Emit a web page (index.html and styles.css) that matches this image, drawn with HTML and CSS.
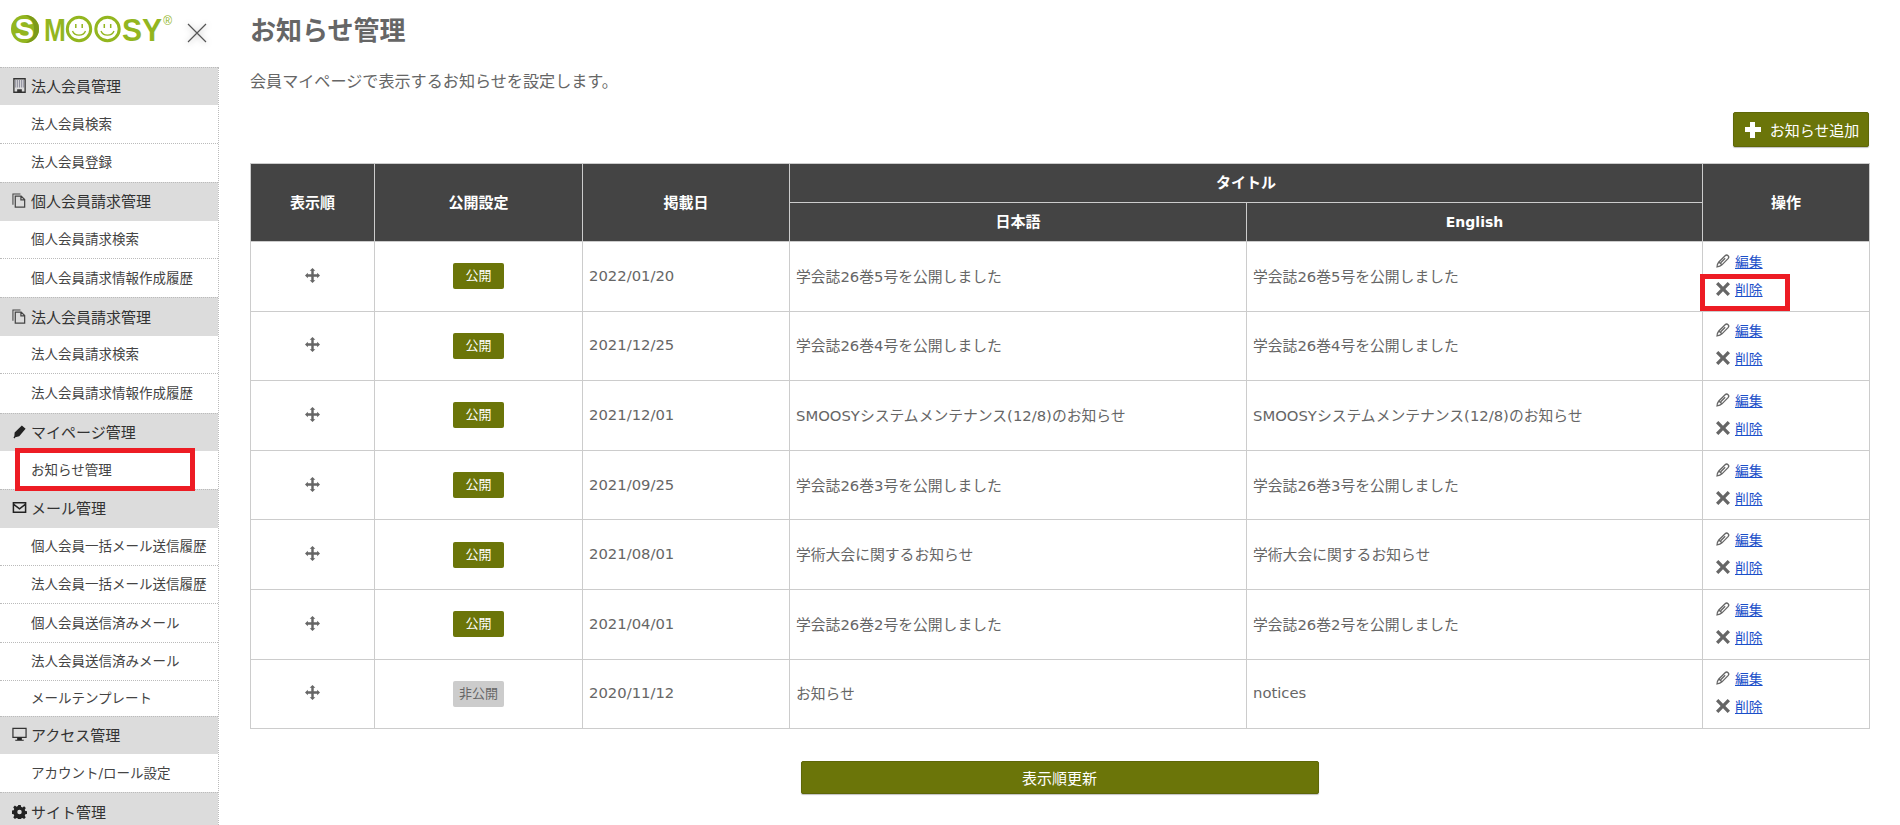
FILE: index.html
```html
<!DOCTYPE html>
<html lang="ja">
<head>
<meta charset="utf-8">
<title>お知らせ管理</title>
<link rel="stylesheet" href="styles.css">
</head>
<body>
<svg class="defs" width="0" height="0" aria-hidden="true">
  <symbol id="i-move" viewBox="0 0 16 16"><path d="M8 0l3 3H9.300v3.700H13V5l3 3-3 3V9.300H9.300V13H11l-3 3-3-3h1.700V9.300H3V11L0 8l3-3v1.700h3.700V3H5z"/></symbol>
  <symbol id="i-pencil" viewBox="0 0 16 16"><path fill="none" stroke="currentColor" stroke-width="1.500" d="M1.200 14.800c.1-2.200.8-4.300 2-5.700L10.400 1.900c1.100-1 2.400-1 3.400 0s1 2.300 0 3.400L6.800 12.400c-1.500 1.400-3.400 2.100-5.600 2.400zM3.200 9.100l3.600 3.300M10.500 4.800L5.400 10"/></symbol>
  <symbol id="i-x" viewBox="0.600 0.600 14.800 14.800"><path d="M3.100.6L8 5.500 12.900.6l2.500 2.500L10.500 8l4.900 4.900-2.500 2.500L8 10.500l-4.900 4.900-2.500-2.500L5.500 8 .6 3.100z"/></symbol>
  <symbol id="i-doc" viewBox="0 0 16 16"><path fill="none" stroke="#444" stroke-width="1.100" d="M1 12.500V1h8"/><path fill="none" stroke="#444" stroke-width="1.300" d="M3.500 3.300h6.300l3.700 3.700v8H3.500zM9.500 3.500V7.300h4"/></symbol>
</svg>
<div class="page">
  <aside class="sidebar">
    <div class="brand">
      <svg class="logo" width="164" height="40" viewBox="0 -4 164 40" role="img" aria-label="SMOOSY">
        <circle cx="16" cy="16" r="14" fill="#93b61f"/>
        <path d="M16 2a14 14 0 0 1 0 28c6-3 9-8 9-14S22 5 16 2z" fill="#7c9a17"/>
        <text x="15.500" y="26" class="logo-s" text-anchor="middle">S</text>
        <text class="logo-t" transform="translate(35 28) scale(.82 1)">M</text>
        <circle cx="70" cy="16" r="11.700" fill="none" stroke="#93b61f" stroke-width="3"/>
        <path d="M63.500 18c2 5.500 11 5.500 13 0" fill="none" stroke="#93b61f" stroke-width="1.300"/>
        <path d="M66.800 11v4M73.200 11v4" stroke="#93b61f" stroke-width="1.500"/>
        <circle cx="98.500" cy="16" r="11.700" fill="none" stroke="#93b61f" stroke-width="3"/>
        <path d="M92 18c2 5.500 11 5.500 13 0" fill="none" stroke="#93b61f" stroke-width="1.300"/>
        <path d="M95.300 11v4M101.700 11v4" stroke="#93b61f" stroke-width="1.500"/>
        <text class="logo-t" transform="translate(113 28) scale(.94 1)">SY</text>
        <text x="163" y="12" class="logo-r" text-anchor="end">®</text>
      </svg>
      <svg class="close" width="20" height="20" viewBox="0 0 20 20"><path d="M1 1l18 18M19 1L1 19" stroke="#555" stroke-width="1.200"/></svg>
    </div>
    <nav class="menu">
      <h2 class="mhead"><svg class="mi" viewBox="0 0 16 16"><path fill="none" stroke="#333" stroke-width="1.400" d="M2 .8h12v14.400H2z"/><path stroke="#8a8a9a" stroke-width="8" stroke-dasharray="1 1" d="M3.500 6h9"/><path fill="#333" d="M5.500 12h5v3h-5z"/></svg>法人会員管理</h2>
      <a class="mitem">法人会員検索</a>
      <a class="mitem">法人会員登録</a>
      <h2 class="mhead"><svg class="mi"><use href="#i-doc"/></svg>個人会員請求管理</h2>
      <a class="mitem">個人会員請求検索</a>
      <a class="mitem">個人会員請求情報作成履歴</a>
      <h2 class="mhead"><svg class="mi"><use href="#i-doc"/></svg>法人会員請求管理</h2>
      <a class="mitem">法人会員請求検索</a>
      <a class="mitem">法人会員請求情報作成履歴</a>
      <h2 class="mhead"><svg class="mi" viewBox="0 0 16 16"><path fill="#222" d="M10.500 1.500l4 3.500-6.800 8L3.500 14l-.6 1.500-1.400-1 1-1.500.3-4z"/></svg>マイページ管理</h2>
      <a class="mitem">お知らせ管理</a>
      <h2 class="mhead"><svg class="mi" viewBox="0 0 16 16"><path fill="none" stroke="#222" stroke-width="1.600" d="M1.500 3h13v10h-13zM1.500 4.500L8 9.500l6.500-5"/></svg>メール管理</h2>
      <a class="mitem">個人会員一括メール送信履歴</a>
      <a class="mitem">法人会員一括メール送信履歴</a>
      <a class="mitem">個人会員送信済みメール</a>
      <a class="mitem">法人会員送信済みメール</a>
      <a class="mitem mitem-short">メールテンプレート</a>
      <h2 class="mhead"><svg class="mi" viewBox="0 0 16 16"><path fill="none" stroke="#333" stroke-width="1.300" d="M1 1.500h14v9.500H1z"/><path fill="#222" d="M5.500 11.500h5v2h2v1.200h-9v-1.200h2z"/></svg>アクセス管理</h2>
      <a class="mitem">アカウント/ロール設定</a>
      <h2 class="mhead"><svg class="mi" viewBox="0 0 16 16"><path fill="#222" fill-rule="evenodd" d="M6.700 1h2.600l.4 2 1.500.6 1.700-1.100 1.800 1.800-1.100 1.700.6 1.500 2 .4v2.600l-2 .4-.6 1.500 1.100 1.700-1.800 1.800-1.700-1.100-1.500.6-.4 2H6.700l-.4-2-1.500-.6-1.700 1.100-1.800-1.800 1.100-1.700-.6-1.500-2-.4V7.100l2-.4.6-1.500-1.100-1.700 1.800-1.800 1.700 1.100 1.500-.6zM8 6a2.400 2.400 0 1 0 0 4.800A2.400 2.400 0 0 0 8 6z"/></svg>サイト管理</h2>
    </nav>
    <div class="mark mark-nav"></div>
  </aside>
  <main class="main">
    <h1 class="title">お知らせ管理</h1>
    <p class="lead">会員マイページで表示するお知らせを設定します。</p>
    <div class="tools"><a class="btn btn-add"><span class="plus"></span>お知らせ追加</a></div>
    <table class="grid">
      <colgroup><col class="c1"><col class="c2"><col class="c3"><col class="c4"><col class="c5"><col class="c6"></colgroup>
      <thead>
        <tr><th rowspan="2">表示順</th><th rowspan="2">公開設定</th><th rowspan="2">掲載日</th><th colspan="2">タイトル</th><th rowspan="2">操作</th></tr>
        <tr><th>日本語</th><th class="th-en">English</th></tr>
      </thead>
      <tbody>
        <tr><td class="ctr"><svg class="move"><use href="#i-move"/></svg></td><td class="ctr"><span class="tag">公開</span></td><td>2022/01/20</td><td>学会誌26巻5号を公開しました</td><td>学会誌26巻5号を公開しました</td><td class="ops"><div class="op"><svg class="oi"><use href="#i-pencil"/></svg><a href="#">編集</a></div><div class="op"><svg class="oi"><use href="#i-x"/></svg><a href="#">削除</a><span class="mark mark-op"></span></div></td></tr>
        <tr><td class="ctr"><svg class="move"><use href="#i-move"/></svg></td><td class="ctr"><span class="tag">公開</span></td><td>2021/12/25</td><td>学会誌26巻4号を公開しました</td><td>学会誌26巻4号を公開しました</td><td class="ops"><div class="op"><svg class="oi"><use href="#i-pencil"/></svg><a href="#">編集</a></div><div class="op"><svg class="oi"><use href="#i-x"/></svg><a href="#">削除</a></div></td></tr>
        <tr><td class="ctr"><svg class="move"><use href="#i-move"/></svg></td><td class="ctr"><span class="tag">公開</span></td><td>2021/12/01</td><td>SMOOSYシステムメンテナンス(12/8)のお知らせ</td><td>SMOOSYシステムメンテナンス(12/8)のお知らせ</td><td class="ops"><div class="op"><svg class="oi"><use href="#i-pencil"/></svg><a href="#">編集</a></div><div class="op"><svg class="oi"><use href="#i-x"/></svg><a href="#">削除</a></div></td></tr>
        <tr><td class="ctr"><svg class="move"><use href="#i-move"/></svg></td><td class="ctr"><span class="tag">公開</span></td><td>2021/09/25</td><td>学会誌26巻3号を公開しました</td><td>学会誌26巻3号を公開しました</td><td class="ops"><div class="op"><svg class="oi"><use href="#i-pencil"/></svg><a href="#">編集</a></div><div class="op"><svg class="oi"><use href="#i-x"/></svg><a href="#">削除</a></div></td></tr>
        <tr><td class="ctr"><svg class="move"><use href="#i-move"/></svg></td><td class="ctr"><span class="tag">公開</span></td><td>2021/08/01</td><td>学術大会に関するお知らせ</td><td>学術大会に関するお知らせ</td><td class="ops"><div class="op"><svg class="oi"><use href="#i-pencil"/></svg><a href="#">編集</a></div><div class="op"><svg class="oi"><use href="#i-x"/></svg><a href="#">削除</a></div></td></tr>
        <tr><td class="ctr"><svg class="move"><use href="#i-move"/></svg></td><td class="ctr"><span class="tag">公開</span></td><td>2021/04/01</td><td>学会誌26巻2号を公開しました</td><td>学会誌26巻2号を公開しました</td><td class="ops"><div class="op"><svg class="oi"><use href="#i-pencil"/></svg><a href="#">編集</a></div><div class="op"><svg class="oi"><use href="#i-x"/></svg><a href="#">削除</a></div></td></tr>
        <tr><td class="ctr"><svg class="move"><use href="#i-move"/></svg></td><td class="ctr"><span class="tag tag-off">非公開</span></td><td>2020/11/12</td><td>お知らせ</td><td>notices</td><td class="ops"><div class="op"><svg class="oi"><use href="#i-pencil"/></svg><a href="#">編集</a></div><div class="op"><svg class="oi"><use href="#i-x"/></svg><a href="#">削除</a></div></td></tr>
      </tbody>
    </table>
    <div class="foot"><a class="btn btn-save">表示順更新</a></div>
  </main>
</div>
</body>
</html>
```

FILE: styles.css
```css
* { box-sizing: border-box; }
html, body { margin: 0; height: 100%; overflow: hidden; background: #fff; }
body { font-family: "DejaVu Sans", "Noto Sans CJK JP", sans-serif; font-size: 15px; color: #666; }
.defs { position: absolute; }
.page { display: flex; height: 825px; }
.sidebar { position: relative; width: 219px; flex: none; }
.brand { height: 67px; padding: 9px 0 0 9px; display: flex; align-items: flex-start; }
.logo { display: block; }
.logo-s { font: bold 29px "Liberation Sans", sans-serif; fill: #fff; }
.logo-t { font: bold 32px "Liberation Sans", sans-serif; fill: #93b61f; }
.logo-r { font: 12px "Liberation Sans", sans-serif; fill: #93b61f; }
.close { margin: 14px 0 0 14px; filter: drop-shadow(0 1px 3px rgba(0,0,0,.3)); }
.menu { border-right: 1px dotted #bbb; }
.mhead { margin: 0; height: 38.400px; padding: 0 0 2px 12px; display: flex; align-items: center; background: #dcdcdc; border-top: 1px dotted #bbb; font-size: 15px; font-weight: 400; color: #333; }
.mi { width: 15px; height: 15px; margin-right: 4px; flex: none; }
.mitem { display: flex; align-items: center; height: 38.400px; padding: 0 0 3px 31px; background: #fff; border-bottom: 1px dotted #bbb; font-size: 13.500px; color: #444; white-space: nowrap; }
.mitem:has(+ .mhead) { border-bottom: 0; }
.mitem-short { height: 34.400px; }
.mark { position: absolute; border: 5px solid #ed1c24; pointer-events: none; }
.mark-nav { left: 15px; top: 448px; width: 180px; height: 43px; }
.main { flex: 1; min-width: 0; padding: 0 31px; }
.title { margin: 0; padding-top: 13px; font-size: 26px; line-height: 36px; font-weight: 700; color: #666; }
.lead { margin: 21px 0 0; font-size: 16.100px; line-height: 24px; color: #666; }
.tools { display: flex; justify-content: flex-end; margin-top: 18px; }
.btn { display: flex; align-items: center; justify-content: center; background: #6b7509; color: #fff; border: 1px solid #5e6708; border-radius: 2px; box-shadow: 0 1px 1px rgba(0,0,0,.25); }
.btn-add { width: 136px; height: 35px; padding-left: 2px; font-size: 15px; }
.plus { width: 16px; height: 16px; margin-right: 9px; background: linear-gradient(#fff,#fff) center/16px 5px no-repeat, linear-gradient(#fff,#fff) center/5px 16px no-repeat; }
.grid { margin-top: 16px; width: 1619px; border-collapse: collapse; table-layout: fixed; }
.c1 { width: 124px; } .c2 { width: 208px; } .c3 { width: 207px; } .c4 { width: 457px; } .c5 { width: 456px; } .c6 { width: 167px; }
.grid th, .grid td { border: 1px solid #ccc; }
.grid th { background: #444; color: #fff; font-size: 15px; font-weight: 700; height: 39px; text-align: center; padding: 0 0 3px; }
.grid th.th-en { font-size: 14px; padding-bottom: 0; }
.grid td { height: 69.600px; padding: 0 6px 2px; font-size: 14.800px; color: #666; }
.grid td.ctr { text-align: center; padding: 0; }
.move { width: 15px; height: 15px; fill: #666; display: block; margin: -2px auto 0; }
.tag { display: inline-block; width: 51px; height: 26px; line-height: 25px; background: #6b7509; color: #fff; border-radius: 2px; font-size: 13px; text-align: center; vertical-align: middle; }
.tag-off { background: #ccc; color: #666; }
.grid td.ops { padding: 0 0 3px 13px; }
.op { position: relative; display: flex; align-items: center; height: 28px; color: #666; }
.oi { width: 14px; height: 14px; fill: #666; color: #666; margin-right: 5px; flex: none; }
.op a { color: #1a4fc9; font-size: 13.800px; }
.mark-op { left: -16px; top: -1px; width: 90px; height: 37px; }
.foot { display: flex; justify-content: center; margin-top: 32px; }
.btn-save { width: 518px; height: 33px; font-size: 15px; }
```
